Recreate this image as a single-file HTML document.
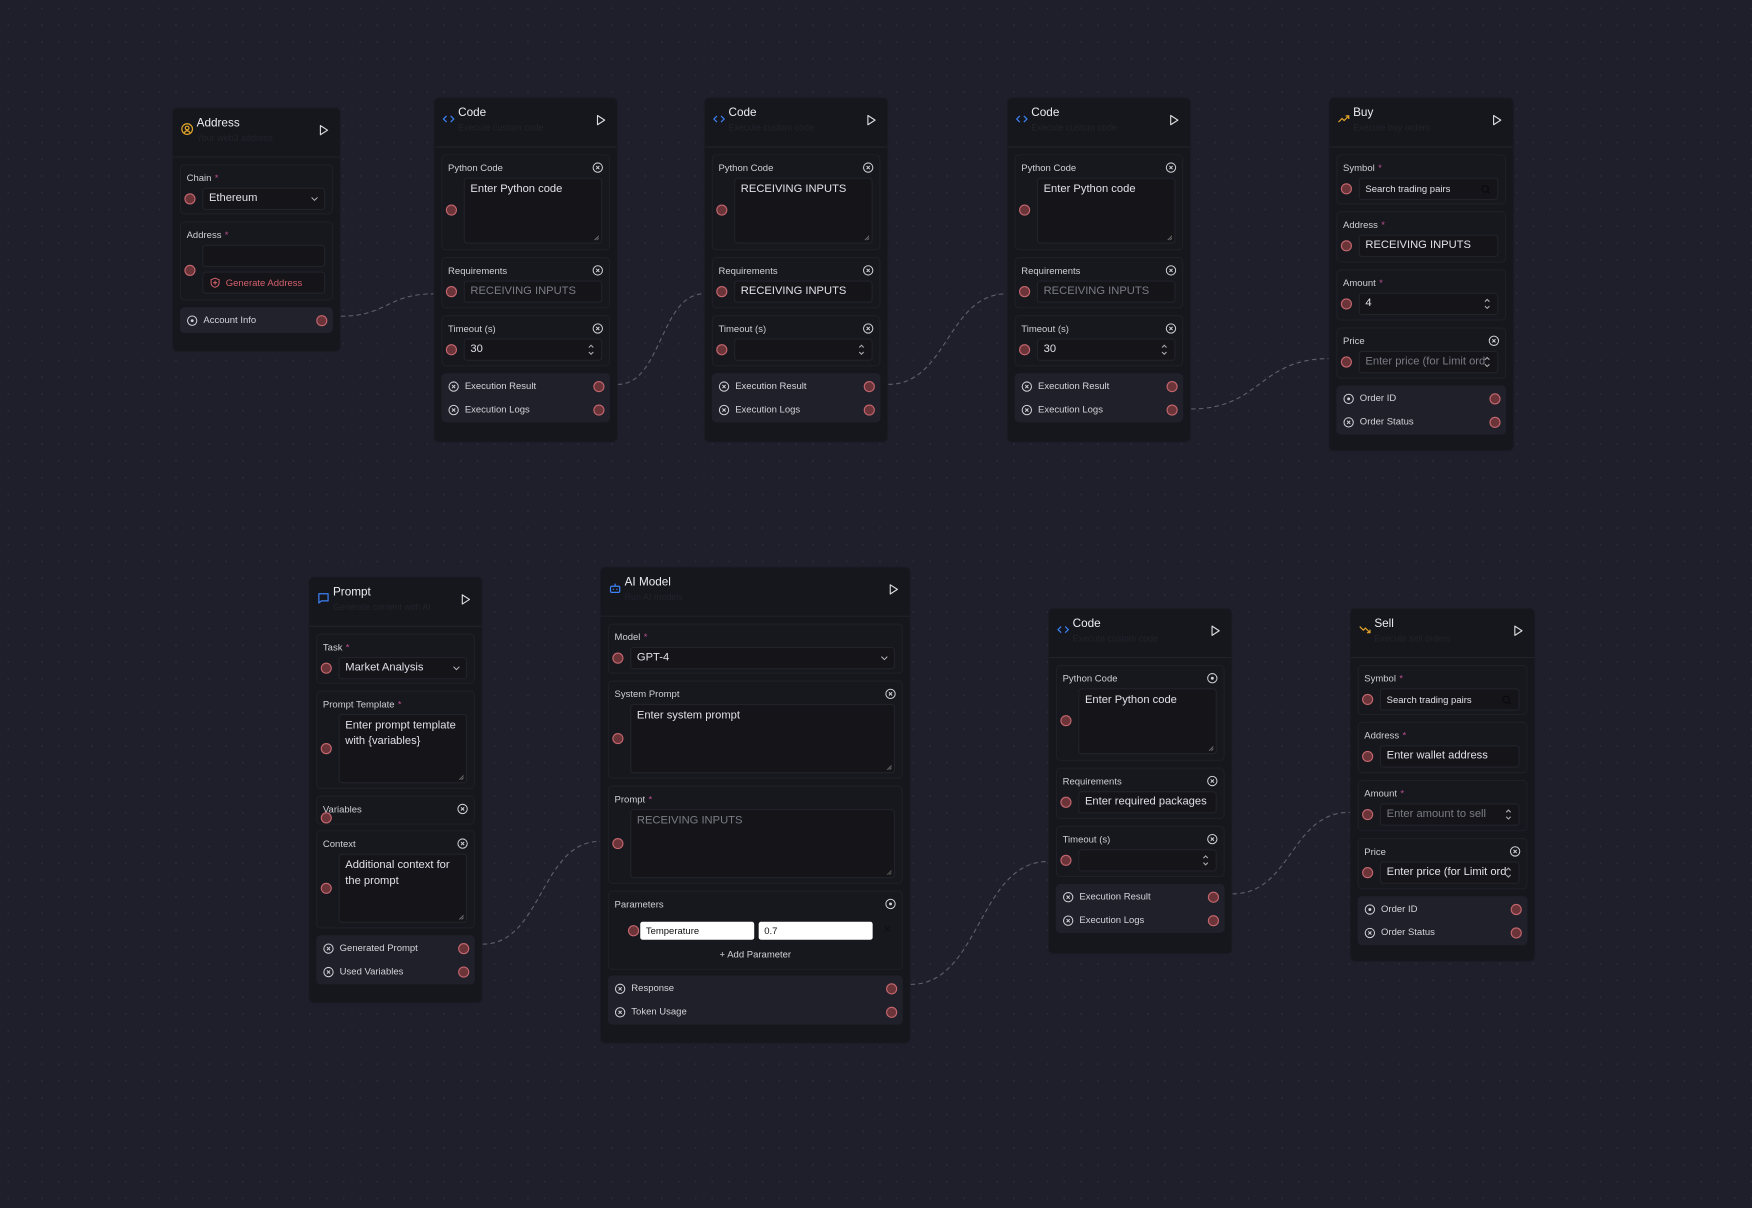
<!DOCTYPE html>
<html><head><meta charset="utf-8"><style>
*{box-sizing:border-box;margin:0;padding:0}
html,body{width:1752px;height:1208px;overflow:hidden;background:#1e1f2b}
body{font-family:"Liberation Sans",sans-serif}
#c{position:absolute;left:0;top:0;width:1568px;height:1081px;transform:scale(1.117347);transform-origin:0 0;
background-color:#1e1f2b;background-image:radial-gradient(circle,#2a2b37 0.7px,transparent 1px);background-size:15px 15px}
.node{position:absolute;background:#16161d;border-radius:5px;border:1px solid #1b1b24}
.hd{height:44px;border-bottom:1px solid #22222b;position:relative}
.hd .hi{position:absolute;left:7px;top:13px;width:11px;height:11px}
.hd .t{position:absolute;left:21px;top:7px;font-size:10.5px;color:#ececf1}
.hd .st{position:absolute;left:21px;top:22px;font-size:8px;color:#23232d}
.hd .pl{position:absolute;right:9px;top:14px;width:11px;height:11px}
.body{padding:6px 6px 0}
.sec{position:relative;background:#17171e;border:1px solid #1f1f28;border-radius:4px;margin-bottom:6px;padding:5px 6px 4px 19px}
.lbl{margin-left:-14px;font-size:8.5px;color:#cfcfd6;height:12px;line-height:12px;margin-bottom:3px;position:relative}
.req{color:#b8508e;margin-left:3px}
.lbl .x{position:absolute;right:-1px;top:1px;width:10px;height:10px}
.inp{height:20px;border:1px solid #22222b;background:#141419;border-radius:3px;font-size:10px;color:#e0e0e6;padding:0 5px;line-height:18px;position:relative;white-space:nowrap;overflow:hidden}
.ta{padding-top:3px;line-height:13.5px;white-space:normal}
.gray{color:#7b7b85}
.h{position:absolute;left:3px;width:10px;height:10px;border-radius:50%;background:#6b3439;border:1.5px solid #c4666e}
.outs{background:#20202a;border-radius:4px;padding:1px 0}
.o{height:21px;position:relative;font-size:8.5px;color:#d4d4db;line-height:21px;padding-left:21px}
.o svg{position:absolute;left:6px;top:5.5px;width:10px;height:10px}
.o .h{left:auto;right:5px;top:5.5px}
.chev{position:absolute;right:5px;top:6px;width:7px;height:6px}
.spin{position:absolute;right:6px;top:3px;width:6px;height:12px}
.grip{position:absolute;right:2px;bottom:2px;width:5px;height:5px}
</style></head><body><div id="c">

<svg width="1568" height="1081" style="position:absolute;left:0;top:0" fill="none" stroke="#5f5f6b" stroke-width="1" stroke-dasharray="4 3">
<path d="M305 283 C346 283 347 263 388 263"/>
<path d="M553 344 C592 344 591 263 630 263"/>
<path d="M795 344 C848 344 848 263 901 263"/>
<path d="M1066 366 C1128 366 1127 321 1189 321"/>
<path d="M432 845 C485 845 484 753 537 753"/>
<path d="M815 881 C877 881 876 771 938 771"/>
<path d="M1103 800 C1156 800 1155 727 1208 727"/>
</svg>

<!-- ADDRESS -->
<div class="node" style="left:154px;top:96px;width:151px;height:219px">
<div class="hd"><svg class="hi" viewBox="0 0 12 12" fill="none" stroke="#e2a52a" stroke-width="1.2"><circle cx="6" cy="6" r="5.2"/><circle cx="6" cy="5" r="1.8"/><path d="M3 10c.8-1.6 1.8-2.2 3-2.2s2.2.6 3 2.2"/></svg><div class="t">Address</div><div class="st">Your web3 address</div><svg class="pl" viewBox="0 0 12 12"><path d="M3 1.5v9l7-4.5z" fill="none" stroke="#ddd" stroke-width="1.1" stroke-linejoin="round"/></svg></div>
<div class="body">
<div class="sec" style="height:45px"><div class="lbl">Chain<span class="req">*</span></div><div class="inp">Ethereum<svg class="chev" viewBox="0 0 8 6"><path d="M1 1.5l3 3 3-3" stroke="#bbb" fill="none"/></svg></div><span class="h" style="top:25px"></span></div>
<div class="sec" style="height:71px"><div class="lbl">Address<span class="req">*</span></div><div class="inp"></div><div class="inp" style="margin-top:4px;color:#d4616c;font-size:8.5px;padding-left:20px"><svg style="position:absolute;left:6px;top:4px;width:9px;height:10px" viewBox="0 0 10 11" fill="none" stroke="#d4616c" stroke-width="1"><path d="M5 1l4 1.5v3c0 2.5-2 4-4 4.5-2-.5-4-2-4-4.5v-3z"/><path d="M5 3.5v4M3 5.5h4"/></svg>Generate Address</div><span class="h" style="top:38px"></span></div>
<div class="outs" style="background:#22222d"><div class="o"><svg viewBox="0 0 12 12"><circle cx="6" cy="6" r="5" fill="none" stroke="#d0d0d8" stroke-width="1.1"/><circle cx="6" cy="6" r="1.6" fill="#d0d0d8"/></svg>Account Info<span class="h"></span></div></div>
</div></div>

<!-- CODE 1 -->
<div class="node" style="left:388px;top:87px;width:165px;height:309px">
<div class="hd"><svg class="hi" viewBox="0 0 12 12" fill="none" stroke="#3b82f6" stroke-width="1.2"><path d="M4 3L1 6l3 3M8 3l3 3-3 3"/></svg><div class="t">Code</div><div class="st">Execute custom code</div><svg class="pl" viewBox="0 0 12 12"><path d="M3 1.5v9l7-4.5z" fill="none" stroke="#ddd" stroke-width="1.1" stroke-linejoin="round"/></svg></div>
<div class="body">
<div class="sec" style="height:86px"><div class="lbl">Python Code<svg class="x" viewBox="0 0 12 12"><circle cx="6" cy="6" r="5" fill="none" stroke="#d0d0d8" stroke-width="1.1"/><path d="M4.3 4.3l3.4 3.4M7.7 4.3l-3.4 3.4" stroke="#d0d0d8" stroke-width="1.1"/></svg></div><div class="inp ta" style="height:59px">Enter Python code<svg class="grip" viewBox="0 0 5 5"><path d="M1 5L5 1M3 5L5 3" stroke="#666"/></svg></div><span class="h" style="top:44px"></span></div>
<div class="sec" style="height:46px"><div class="lbl">Requirements<svg class="x" viewBox="0 0 12 12"><circle cx="6" cy="6" r="5" fill="none" stroke="#d0d0d8" stroke-width="1.1"/><path d="M4.3 4.3l3.4 3.4M7.7 4.3l-3.4 3.4" stroke="#d0d0d8" stroke-width="1.1"/></svg></div><div class="inp gray">RECEIVING INPUTS</div><span class="h" style="top:25px"></span></div>
<div class="sec" style="height:46px"><div class="lbl">Timeout (s)<svg class="x" viewBox="0 0 12 12"><circle cx="6" cy="6" r="5" fill="none" stroke="#d0d0d8" stroke-width="1.1"/><path d="M4.3 4.3l3.4 3.4M7.7 4.3l-3.4 3.4" stroke="#d0d0d8" stroke-width="1.1"/></svg></div><div class="inp">30<svg class="spin" viewBox="0 0 6 12"><path d="M1 4l2-2 2 2M1 8l2 2 2-2" stroke="#aaa" fill="none"/></svg></div><span class="h" style="top:25px"></span></div>
<div class="outs"><div class="o"><svg viewBox="0 0 12 12"><circle cx="6" cy="6" r="5" fill="none" stroke="#d0d0d8" stroke-width="1.1"/><path d="M4.3 4.3l3.4 3.4M7.7 4.3l-3.4 3.4" stroke="#d0d0d8" stroke-width="1.1"/></svg>Execution Result<span class="h"></span></div><div class="o"><svg viewBox="0 0 12 12"><circle cx="6" cy="6" r="5" fill="none" stroke="#d0d0d8" stroke-width="1.1"/><path d="M4.3 4.3l3.4 3.4M7.7 4.3l-3.4 3.4" stroke="#d0d0d8" stroke-width="1.1"/></svg>Execution Logs<span class="h"></span></div></div>
</div></div>

<!-- CODE 2 -->
<div class="node" style="left:630px;top:87px;width:165px;height:309px">
<div class="hd"><svg class="hi" viewBox="0 0 12 12" fill="none" stroke="#3b82f6" stroke-width="1.2"><path d="M4 3L1 6l3 3M8 3l3 3-3 3"/></svg><div class="t">Code</div><div class="st">Execute custom code</div><svg class="pl" viewBox="0 0 12 12"><path d="M3 1.5v9l7-4.5z" fill="none" stroke="#ddd" stroke-width="1.1" stroke-linejoin="round"/></svg></div>
<div class="body">
<div class="sec" style="height:86px"><div class="lbl">Python Code<svg class="x" viewBox="0 0 12 12"><circle cx="6" cy="6" r="5" fill="none" stroke="#d0d0d8" stroke-width="1.1"/><path d="M4.3 4.3l3.4 3.4M7.7 4.3l-3.4 3.4" stroke="#d0d0d8" stroke-width="1.1"/></svg></div><div class="inp ta" style="height:59px">RECEIVING INPUTS<svg class="grip" viewBox="0 0 5 5"><path d="M1 5L5 1M3 5L5 3" stroke="#666"/></svg></div><span class="h" style="top:44px"></span></div>
<div class="sec" style="height:46px"><div class="lbl">Requirements<svg class="x" viewBox="0 0 12 12"><circle cx="6" cy="6" r="5" fill="none" stroke="#d0d0d8" stroke-width="1.1"/><path d="M4.3 4.3l3.4 3.4M7.7 4.3l-3.4 3.4" stroke="#d0d0d8" stroke-width="1.1"/></svg></div><div class="inp">RECEIVING INPUTS</div><span class="h" style="top:25px"></span></div>
<div class="sec" style="height:46px"><div class="lbl">Timeout (s)<svg class="x" viewBox="0 0 12 12"><circle cx="6" cy="6" r="5" fill="none" stroke="#d0d0d8" stroke-width="1.1"/><path d="M4.3 4.3l3.4 3.4M7.7 4.3l-3.4 3.4" stroke="#d0d0d8" stroke-width="1.1"/></svg></div><div class="inp"><svg class="spin" viewBox="0 0 6 12"><path d="M1 4l2-2 2 2M1 8l2 2 2-2" stroke="#aaa" fill="none"/></svg></div><span class="h" style="top:25px"></span></div>
<div class="outs"><div class="o"><svg viewBox="0 0 12 12"><circle cx="6" cy="6" r="5" fill="none" stroke="#d0d0d8" stroke-width="1.1"/><path d="M4.3 4.3l3.4 3.4M7.7 4.3l-3.4 3.4" stroke="#d0d0d8" stroke-width="1.1"/></svg>Execution Result<span class="h"></span></div><div class="o"><svg viewBox="0 0 12 12"><circle cx="6" cy="6" r="5" fill="none" stroke="#d0d0d8" stroke-width="1.1"/><path d="M4.3 4.3l3.4 3.4M7.7 4.3l-3.4 3.4" stroke="#d0d0d8" stroke-width="1.1"/></svg>Execution Logs<span class="h"></span></div></div>
</div></div>

<!-- CODE 3 -->
<div class="node" style="left:901px;top:87px;width:165px;height:309px">
<div class="hd"><svg class="hi" viewBox="0 0 12 12" fill="none" stroke="#3b82f6" stroke-width="1.2"><path d="M4 3L1 6l3 3M8 3l3 3-3 3"/></svg><div class="t">Code</div><div class="st">Execute custom code</div><svg class="pl" viewBox="0 0 12 12"><path d="M3 1.5v9l7-4.5z" fill="none" stroke="#ddd" stroke-width="1.1" stroke-linejoin="round"/></svg></div>
<div class="body">
<div class="sec" style="height:86px"><div class="lbl">Python Code<svg class="x" viewBox="0 0 12 12"><circle cx="6" cy="6" r="5" fill="none" stroke="#d0d0d8" stroke-width="1.1"/><path d="M4.3 4.3l3.4 3.4M7.7 4.3l-3.4 3.4" stroke="#d0d0d8" stroke-width="1.1"/></svg></div><div class="inp ta" style="height:59px">Enter Python code<svg class="grip" viewBox="0 0 5 5"><path d="M1 5L5 1M3 5L5 3" stroke="#666"/></svg></div><span class="h" style="top:44px"></span></div>
<div class="sec" style="height:46px"><div class="lbl">Requirements<svg class="x" viewBox="0 0 12 12"><circle cx="6" cy="6" r="5" fill="none" stroke="#d0d0d8" stroke-width="1.1"/><path d="M4.3 4.3l3.4 3.4M7.7 4.3l-3.4 3.4" stroke="#d0d0d8" stroke-width="1.1"/></svg></div><div class="inp gray">RECEIVING INPUTS</div><span class="h" style="top:25px"></span></div>
<div class="sec" style="height:46px"><div class="lbl">Timeout (s)<svg class="x" viewBox="0 0 12 12"><circle cx="6" cy="6" r="5" fill="none" stroke="#d0d0d8" stroke-width="1.1"/><path d="M4.3 4.3l3.4 3.4M7.7 4.3l-3.4 3.4" stroke="#d0d0d8" stroke-width="1.1"/></svg></div><div class="inp">30<svg class="spin" viewBox="0 0 6 12"><path d="M1 4l2-2 2 2M1 8l2 2 2-2" stroke="#aaa" fill="none"/></svg></div><span class="h" style="top:25px"></span></div>
<div class="outs"><div class="o"><svg viewBox="0 0 12 12"><circle cx="6" cy="6" r="5" fill="none" stroke="#d0d0d8" stroke-width="1.1"/><path d="M4.3 4.3l3.4 3.4M7.7 4.3l-3.4 3.4" stroke="#d0d0d8" stroke-width="1.1"/></svg>Execution Result<span class="h"></span></div><div class="o"><svg viewBox="0 0 12 12"><circle cx="6" cy="6" r="5" fill="none" stroke="#d0d0d8" stroke-width="1.1"/><path d="M4.3 4.3l3.4 3.4M7.7 4.3l-3.4 3.4" stroke="#d0d0d8" stroke-width="1.1"/></svg>Execution Logs<span class="h"></span></div></div>
</div></div>

<!-- BUY -->
<div class="node" style="left:1189px;top:87px;width:166px;height:317px">
<div class="hd"><svg class="hi" viewBox="0 0 12 12" fill="none" stroke="#e2a52a" stroke-width="1.2"><path d="M1 9l3.5-3.5 2 2L11 3M8 3h3v3"/></svg><div class="t">Buy</div><div class="st">Execute buy orders</div><svg class="pl" viewBox="0 0 12 12"><path d="M3 1.5v9l7-4.5z" fill="none" stroke="#ddd" stroke-width="1.1" stroke-linejoin="round"/></svg></div>
<div class="body">
<div class="sec" style="height:45px"><div class="lbl">Symbol<span class="req">*</span></div><div class="inp" style="font-size:8.5px">Search trading pairs<svg style="position:absolute;right:6px;top:5px;width:9px;height:9px" viewBox="0 0 10 10" fill="none" stroke="#0b0b0f" stroke-width="1.2"><circle cx="4.5" cy="4.5" r="3.3"/><path d="M7 7l2 2"/></svg></div><span class="h" style="top:25px"></span></div>
<div class="sec" style="height:46px"><div class="lbl">Address<span class="req">*</span></div><div class="inp">RECEIVING INPUTS</div><span class="h" style="top:25px"></span></div>
<div class="sec" style="height:46px"><div class="lbl">Amount<span class="req">*</span></div><div class="inp">4<svg class="spin" viewBox="0 0 6 12"><path d="M1 4l2-2 2 2M1 8l2 2 2-2" stroke="#aaa" fill="none"/></svg></div><span class="h" style="top:25px"></span></div>
<div class="sec" style="height:46px"><div class="lbl">Price<svg class="x" viewBox="0 0 12 12"><circle cx="6" cy="6" r="5" fill="none" stroke="#d0d0d8" stroke-width="1.1"/><path d="M4.3 4.3l3.4 3.4M7.7 4.3l-3.4 3.4" stroke="#d0d0d8" stroke-width="1.1"/></svg></div><div class="inp gray">Enter price (for Limit ord<svg class="spin" viewBox="0 0 6 12"><path d="M1 4l2-2 2 2M1 8l2 2 2-2" stroke="#aaa" fill="none"/></svg></div><span class="h" style="top:25px"></span></div>
<div class="outs"><div class="o"><svg viewBox="0 0 12 12"><circle cx="6" cy="6" r="5" fill="none" stroke="#d0d0d8" stroke-width="1.1"/><circle cx="6" cy="6" r="1.6" fill="#d0d0d8"/></svg>Order ID<span class="h"></span></div><div class="o"><svg viewBox="0 0 12 12"><circle cx="6" cy="6" r="5" fill="none" stroke="#d0d0d8" stroke-width="1.1"/><path d="M4.3 4.3l3.4 3.4M7.7 4.3l-3.4 3.4" stroke="#d0d0d8" stroke-width="1.1"/></svg>Order Status<span class="h"></span></div></div>
</div></div>

<!-- PROMPT -->
<div class="node" style="left:276px;top:516px;width:156px;height:382px">
<div class="hd"><svg class="hi" viewBox="0 0 12 12" fill="none" stroke="#3b82f6" stroke-width="1.2"><path d="M1.5 1.5h9v7H4l-2.5 2z" stroke-linejoin="round"/></svg><div class="t">Prompt</div><div class="st">Generate content with AI</div><svg class="pl" viewBox="0 0 12 12"><path d="M3 1.5v9l7-4.5z" fill="none" stroke="#ddd" stroke-width="1.1" stroke-linejoin="round"/></svg></div>
<div class="body">
<div class="sec" style="height:45px"><div class="lbl">Task<span class="req">*</span></div><div class="inp">Market Analysis<svg class="chev" viewBox="0 0 8 6"><path d="M1 1.5l3 3 3-3" stroke="#bbb" fill="none"/></svg></div><span class="h" style="top:25px"></span></div>
<div class="sec" style="height:88px"><div class="lbl">Prompt Template<span class="req">*</span></div><div class="inp ta" style="height:62px">Enter prompt template with {variables}<svg class="grip" viewBox="0 0 5 5"><path d="M1 5L5 1M3 5L5 3" stroke="#666"/></svg></div><span class="h" style="top:46px"></span></div>
<div class="sec" style="height:26px;margin-bottom:5px"><div class="lbl">Variables<svg class="x" viewBox="0 0 12 12"><circle cx="6" cy="6" r="5" fill="none" stroke="#d0d0d8" stroke-width="1.1"/><path d="M4.3 4.3l3.4 3.4M7.7 4.3l-3.4 3.4" stroke="#d0d0d8" stroke-width="1.1"/></svg></div><span class="h" style="top:14px"></span></div>
<div class="sec" style="height:88px"><div class="lbl">Context<svg class="x" viewBox="0 0 12 12"><circle cx="6" cy="6" r="5" fill="none" stroke="#d0d0d8" stroke-width="1.1"/><path d="M4.3 4.3l3.4 3.4M7.7 4.3l-3.4 3.4" stroke="#d0d0d8" stroke-width="1.1"/></svg></div><div class="inp ta" style="height:62px">Additional context for the prompt<svg class="grip" viewBox="0 0 5 5"><path d="M1 5L5 1M3 5L5 3" stroke="#666"/></svg></div><span class="h" style="top:46px"></span></div>
<div class="outs"><div class="o"><svg viewBox="0 0 12 12"><circle cx="6" cy="6" r="5" fill="none" stroke="#d0d0d8" stroke-width="1.1"/><path d="M4.3 4.3l3.4 3.4M7.7 4.3l-3.4 3.4" stroke="#d0d0d8" stroke-width="1.1"/></svg>Generated Prompt<span class="h"></span></div><div class="o"><svg viewBox="0 0 12 12"><circle cx="6" cy="6" r="5" fill="none" stroke="#d0d0d8" stroke-width="1.1"/><path d="M4.3 4.3l3.4 3.4M7.7 4.3l-3.4 3.4" stroke="#d0d0d8" stroke-width="1.1"/></svg>Used Variables<span class="h"></span></div></div>
</div></div>

<!-- AI MODEL -->
<div class="node" style="left:537px;top:507px;width:278px;height:427px">
<div class="hd"><svg class="hi" viewBox="0 0 12 12" fill="none" stroke="#3b82f6" stroke-width="1.2"><rect x="1.5" y="4" width="9" height="6" rx="1.2"/><path d="M6 1.5V4M4.3 6.5v1M7.7 6.5v1"/></svg><div class="t">AI Model</div><div class="st">Run AI models</div><svg class="pl" viewBox="0 0 12 12"><path d="M3 1.5v9l7-4.5z" fill="none" stroke="#ddd" stroke-width="1.1" stroke-linejoin="round"/></svg></div>
<div class="body">
<div class="sec" style="height:45px"><div class="lbl">Model<span class="req">*</span></div><div class="inp">GPT-4<svg class="chev" viewBox="0 0 8 6"><path d="M1 1.5l3 3 3-3" stroke="#bbb" fill="none"/></svg></div><span class="h" style="top:25px"></span></div>
<div class="sec" style="height:88px"><div class="lbl">System Prompt<svg class="x" viewBox="0 0 12 12"><circle cx="6" cy="6" r="5" fill="none" stroke="#d0d0d8" stroke-width="1.1"/><path d="M4.3 4.3l3.4 3.4M7.7 4.3l-3.4 3.4" stroke="#d0d0d8" stroke-width="1.1"/></svg></div><div class="inp ta" style="height:62px">Enter system prompt<svg class="grip" viewBox="0 0 5 5"><path d="M1 5L5 1M3 5L5 3" stroke="#666"/></svg></div><span class="h" style="top:46px"></span></div>
<div class="sec" style="height:88px"><div class="lbl">Prompt<span class="req">*</span></div><div class="inp ta gray" style="height:62px">RECEIVING INPUTS<svg class="grip" viewBox="0 0 5 5"><path d="M1 5L5 1M3 5L5 3" stroke="#555"/></svg></div><span class="h" style="top:46px"></span></div>
<div class="sec" style="height:71px"><div class="lbl">Parameters<svg class="x" viewBox="0 0 12 12"><circle cx="6" cy="6" r="5" fill="none" stroke="#d0d0d8" stroke-width="1.1"/><circle cx="6" cy="6" r="1.6" fill="#d0d0d8"/></svg></div>
<span class="h" style="top:30px;left:17px"></span>
<div style="position:absolute;left:28px;top:27px;width:102px;height:16px;background:#fff;border-radius:2px;font-size:8.5px;color:#111;line-height:16px;padding-left:5px">Temperature</div>
<div style="position:absolute;left:134px;top:27px;width:102px;height:16px;background:#fff;border-radius:2px;font-size:8.5px;color:#111;line-height:16px;padding-left:5px">0.7</div>
<div style="position:absolute;left:245px;top:29px;font-size:10px;color:#111">✕</div>
<div style="position:absolute;left:0;right:0;top:51px;text-align:center;font-size:8.5px;color:#d4d4db">+ Add Parameter</div>
</div>
<div class="outs" style="margin-top:-1px"><div class="o"><svg viewBox="0 0 12 12"><circle cx="6" cy="6" r="5" fill="none" stroke="#d0d0d8" stroke-width="1.1"/><path d="M4.3 4.3l3.4 3.4M7.7 4.3l-3.4 3.4" stroke="#d0d0d8" stroke-width="1.1"/></svg>Response<span class="h"></span></div><div class="o"><svg viewBox="0 0 12 12"><circle cx="6" cy="6" r="5" fill="none" stroke="#d0d0d8" stroke-width="1.1"/><path d="M4.3 4.3l3.4 3.4M7.7 4.3l-3.4 3.4" stroke="#d0d0d8" stroke-width="1.1"/></svg>Token Usage<span class="h"></span></div></div>
</div></div>

<!-- CODE 4 -->
<div class="node" style="left:938px;top:544px;width:165px;height:310px">
<div class="hd"><svg class="hi" viewBox="0 0 12 12" fill="none" stroke="#3b82f6" stroke-width="1.2"><path d="M4 3L1 6l3 3M8 3l3 3-3 3"/></svg><div class="t">Code</div><div class="st">Execute custom code</div><svg class="pl" viewBox="0 0 12 12"><path d="M3 1.5v9l7-4.5z" fill="none" stroke="#ddd" stroke-width="1.1" stroke-linejoin="round"/></svg></div>
<div class="body">
<div class="sec" style="height:86px"><div class="lbl">Python Code<svg class="x" viewBox="0 0 12 12"><circle cx="6" cy="6" r="5" fill="none" stroke="#d0d0d8" stroke-width="1.1"/><circle cx="6" cy="6" r="1.6" fill="#d0d0d8"/></svg></div><div class="inp ta" style="height:59px">Enter Python code<svg class="grip" viewBox="0 0 5 5"><path d="M1 5L5 1M3 5L5 3" stroke="#666"/></svg></div><span class="h" style="top:44px"></span></div>
<div class="sec" style="height:46px"><div class="lbl">Requirements<svg class="x" viewBox="0 0 12 12"><circle cx="6" cy="6" r="5" fill="none" stroke="#d0d0d8" stroke-width="1.1"/><path d="M4.3 4.3l3.4 3.4M7.7 4.3l-3.4 3.4" stroke="#d0d0d8" stroke-width="1.1"/></svg></div><div class="inp">Enter required packages</div><span class="h" style="top:25px"></span></div>
<div class="sec" style="height:46px"><div class="lbl">Timeout (s)<svg class="x" viewBox="0 0 12 12"><circle cx="6" cy="6" r="5" fill="none" stroke="#d0d0d8" stroke-width="1.1"/><path d="M4.3 4.3l3.4 3.4M7.7 4.3l-3.4 3.4" stroke="#d0d0d8" stroke-width="1.1"/></svg></div><div class="inp"><svg class="spin" viewBox="0 0 6 12"><path d="M1 4l2-2 2 2M1 8l2 2 2-2" stroke="#aaa" fill="none"/></svg></div><span class="h" style="top:25px"></span></div>
<div class="outs"><div class="o"><svg viewBox="0 0 12 12"><circle cx="6" cy="6" r="5" fill="none" stroke="#d0d0d8" stroke-width="1.1"/><path d="M4.3 4.3l3.4 3.4M7.7 4.3l-3.4 3.4" stroke="#d0d0d8" stroke-width="1.1"/></svg>Execution Result<span class="h"></span></div><div class="o"><svg viewBox="0 0 12 12"><circle cx="6" cy="6" r="5" fill="none" stroke="#d0d0d8" stroke-width="1.1"/><path d="M4.3 4.3l3.4 3.4M7.7 4.3l-3.4 3.4" stroke="#d0d0d8" stroke-width="1.1"/></svg>Execution Logs<span class="h"></span></div></div>
</div></div>

<!-- SELL -->
<div class="node" style="left:1208px;top:544px;width:166px;height:317px">
<div class="hd"><svg class="hi" viewBox="0 0 12 12" fill="none" stroke="#e2a52a" stroke-width="1.2"><path d="M1 3l3.5 3.5 2-2L11 9M8 9h3V6"/></svg><div class="t">Sell</div><div class="st">Execute sell orders</div><svg class="pl" viewBox="0 0 12 12"><path d="M3 1.5v9l7-4.5z" fill="none" stroke="#ddd" stroke-width="1.1" stroke-linejoin="round"/></svg></div>
<div class="body">
<div class="sec" style="height:45px"><div class="lbl">Symbol<span class="req">*</span></div><div class="inp" style="font-size:8.5px">Search trading pairs<svg style="position:absolute;right:6px;top:5px;width:9px;height:9px" viewBox="0 0 10 10" fill="none" stroke="#0b0b0f" stroke-width="1.2"><circle cx="4.5" cy="4.5" r="3.3"/><path d="M7 7l2 2"/></svg></div><span class="h" style="top:25px"></span></div>
<div class="sec" style="height:46px"><div class="lbl">Address<span class="req">*</span></div><div class="inp">Enter wallet address</div><span class="h" style="top:25px"></span></div>
<div class="sec" style="height:46px"><div class="lbl">Amount<span class="req">*</span></div><div class="inp gray">Enter amount to sell<svg class="spin" viewBox="0 0 6 12"><path d="M1 4l2-2 2 2M1 8l2 2 2-2" stroke="#aaa" fill="none"/></svg></div><span class="h" style="top:25px"></span></div>
<div class="sec" style="height:46px"><div class="lbl">Price<svg class="x" viewBox="0 0 12 12"><circle cx="6" cy="6" r="5" fill="none" stroke="#d0d0d8" stroke-width="1.1"/><path d="M4.3 4.3l3.4 3.4M7.7 4.3l-3.4 3.4" stroke="#d0d0d8" stroke-width="1.1"/></svg></div><div class="inp">Enter price (for Limit ord<svg class="spin" viewBox="0 0 6 12"><path d="M1 4l2-2 2 2M1 8l2 2 2-2" stroke="#aaa" fill="none"/></svg></div><span class="h" style="top:25px"></span></div>
<div class="outs"><div class="o"><svg viewBox="0 0 12 12"><circle cx="6" cy="6" r="5" fill="none" stroke="#d0d0d8" stroke-width="1.1"/><circle cx="6" cy="6" r="1.6" fill="#d0d0d8"/></svg>Order ID<span class="h"></span></div><div class="o"><svg viewBox="0 0 12 12"><circle cx="6" cy="6" r="5" fill="none" stroke="#d0d0d8" stroke-width="1.1"/><path d="M4.3 4.3l3.4 3.4M7.7 4.3l-3.4 3.4" stroke="#d0d0d8" stroke-width="1.1"/></svg>Order Status<span class="h"></span></div></div>
</div></div>

</div></body></html>
